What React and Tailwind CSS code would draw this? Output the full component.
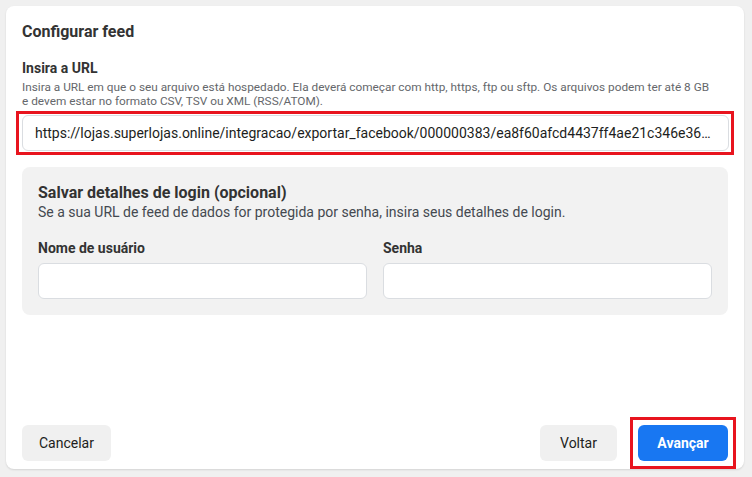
export default function App() {
  return (
    <div
      className="h-screen w-full bg-[#f0f0f0] pt-[6px] pl-[6px] pr-[8px] pb-[8px] text-[#1c1e21]"
      style={{ fontFamily: 'Roboto, "Liberation Sans", Arial, sans-serif' }}
    >
      <div className="flex h-full flex-col rounded-lg bg-white px-4 pt-4 pb-2 shadow-[0_1px_2px_rgba(0,0,0,0.12)]">
        <h1 className="text-[16px] font-bold leading-5 text-[#333]">Configurar feed</h1>

        <div className="mt-[18px]">
          <div className="text-[14px] font-bold leading-4 text-[#333]">Insira a URL</div>
          <p className="mt-[4px] text-[11.8px] leading-[14px] text-[#65676b]">
            <span className="whitespace-nowrap">
              Insira a URL em que o seu arquivo está hospedado. Ela deverá começar com http, https, ftp ou sftp. Os arquivos podem ter até 8 GB
            </span>
            <br />
            e devem estar no formato CSV, TSV ou XML (RSS/ATOM).
          </p>
          <div className="-mx-[6px] mt-[3px] border-[3px] border-[#e8141e] pt-px pb-px pl-[3px] pr-[2px]">
            <div className="flex h-9 items-center rounded-md border border-[#dadde1] bg-white px-3">
              <span className="truncate text-[14px] text-[#1c1e21]">
                https://lojas.superlojas.online/integracao/exportar_facebook/000000383/ea8f60afcd4437ff4ae21c346e36b7a1c0d2f9e8
              </span>
            </div>
          </div>
        </div>

        <div className="mt-3 rounded-lg bg-[#f2f2f2] p-4">
          <h2 className="text-[16px] font-bold leading-5 text-[#333]">Salvar detalhes de login (opcional)</h2>
          <p className="text-[14px] leading-[18px] text-[#444950]">
            Se a sua URL de feed de dados for protegida por senha, insira seus detalhes de login.
          </p>
          <div className="mt-[19px] grid grid-cols-2 gap-4">
            <div>
              <label className="block text-[14px] font-bold leading-4 text-[#333]">Nome de usuário</label>
              <div className="mt-[7px] h-9 rounded-md border border-[#dadde1] bg-white" />
            </div>
            <div>
              <label className="block text-[14px] font-bold leading-4 text-[#333]">Senha</label>
              <div className="mt-[7px] h-9 rounded-md border border-[#dadde1] bg-white" />
            </div>
          </div>
        </div>

        <div className="mt-auto flex items-center justify-between">
          <button className="h-9 w-[89px] rounded-md bg-[#f0f0f0] text-[14px] text-[#1c1e21]">Cancelar</button>
          <div className="flex items-center gap-[13px]">
            <button className="h-9 w-[77px] rounded-md bg-[#f0f0f0] text-[14px] text-[#1c1e21]">Voltar</button>
            <div className="-my-[8px] -mr-[8px] border-[3px] border-[#e8141e] p-[5px]">
              <button className="block h-9 w-[90px] rounded-md bg-[#1877f2] text-[14px] font-bold text-white">
                Avançar
              </button>
            </div>
          </div>
        </div>
      </div>
    </div>
  );
}
